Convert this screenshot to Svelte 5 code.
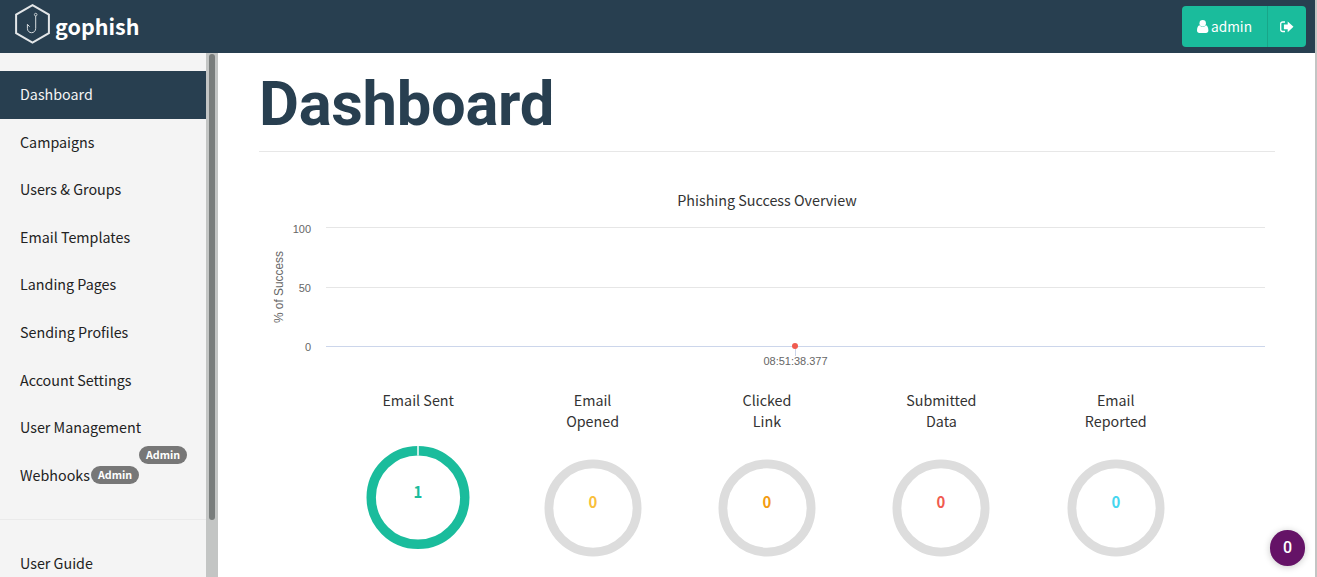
<script>
  const nav = [
    { label: 'Dashboard', active: true },
    { label: 'Campaigns' },
    { label: 'Users & Groups' },
    { label: 'Email Templates' },
    { label: 'Landing Pages' },
    { label: 'Sending Profiles' },
    { label: 'Account Settings' },
    { label: 'User Management', badge: 'high' },
    { label: 'Webhooks', badge: 'inline' }
  ];

  const stats = [
    { lines: ['Email Sent'], value: 1, color: '#1abc9c', full: true },
    { lines: ['Email', 'Opened'], value: 0, color: '#f9bf3b' },
    { lines: ['Clicked', 'Link'], value: 0, color: '#f39c12' },
    { lines: ['Submitted', 'Data'], value: 0, color: '#f05b4f' },
    { lines: ['Email', 'Reported'], value: 0, color: '#45d6ef' }
  ];
</script>

<div class="page">
  <header>
    <a class="brand" href="#home">
      <svg width="36" height="40" viewBox="0 0 36 40" fill="none">
        <path d="M17.500 1.200 33.900 10.700V29.200L17.500 38.700 1.100 29.200V10.700Z" stroke="#e3e6e8" stroke-width="2" />
        <circle cx="20.700" cy="10.600" r="1.300" stroke="#d5dadd" stroke-width="0.9" />
        <path d="M20.700 12V24.300C20.700 30.200 12.400 30.200 12.400 24.300V20.300L14.600 22.700" stroke="#d5dadd" stroke-width="1" />
      </svg>
      <span>gophish</span>
    </a>
    <div class="account">
      <button class="user">
        <svg width="12" height="13" viewBox="0 0 12 13" fill="#fff">
          <circle cx="5.700" cy="3.200" r="3.200" />
          <path d="M2.600 5.200C.8 5.500.1 7.600 0 10.200 0 12 .9 13 2.400 13H9C10.500 13 11.400 12 11.400 10.200 11.300 7.600 10.600 5.500 8.800 5.200 7.200 7.200 4.200 7.200 2.600 5.200Z" />
        </svg>
        <span>admin</span>
      </button>
      <button class="exit" aria-label="Sign out">
        <svg width="14" height="12" viewBox="0 0 14 12">
          <path d="M5 1H2.800Q.7 1 .7 3V8.500Q.7 10.500 2.800 10.500H5" fill="none" stroke="#fff" stroke-width="1.300" />
          <path d="M7.700.4 13.500 5.800 7.700 11.200V8.200H3.900V3.400H7.700Z" fill="#fff" />
        </svg>
      </button>
    </div>
  </header>

  <div class="body">
    <aside>
      <nav>
        {#each nav as item}
          <a href="#nav" class:active={item.active}>
            <span>{item.label}</span>
            {#if item.badge}<b class="badge {item.badge}">Admin</b>{/if}
          </a>
        {/each}
        <hr />
        <a href="#guide"><span>User Guide</span></a>
      </nav>
      <div class="track"><div class="thumb"></div></div>
    </aside>

    <main>
      <h1>Dashboard</h1>
      <svg class="overview" width="1016" height="204" viewBox="0 0 1016 204">
        <text class="title" x="508" y="34" text-anchor="middle" textLength="179.500">Phishing Success Overview</text>
        <g shape-rendering="crispEdges">
          <path d="M67 55.500H1006M67 115.500H1006" stroke="#e6e6e6" />
          <path d="M67 174.500H1006M536.500 175V184" stroke="#ccd6eb" />
        </g>
        <g class="axis" text-anchor="end">
          <text x="52" y="61">100</text>
          <text x="52" y="120">50</text>
          <text x="52" y="179">0</text>
        </g>
        <text class="axis-title" transform="translate(24 115) rotate(-90)" text-anchor="middle" textLength="72" lengthAdjust="spacingAndGlyphs">% of Success</text>
        <circle cx="536" cy="174" r="3" fill="#f05b4f" />
        <text class="axis" x="536.500" y="193" text-anchor="middle" textLength="64">08:51:38.377</text>
      </svg>

      <section class="stats">
        {#each stats as s}
          <figure class:full={s.full}>
            <figcaption>
              {#each s.lines as line}<span>{line}</span>{/each}
            </figcaption>
            <svg width="104" height="104" viewBox="0 0 104 104">
              {#if s.full}
                <circle cx="52" cy="52.500" r="46.800" fill="none" stroke={s.color} stroke-width="9.400" />
                <path d="M52 0V10.500" stroke="#fff" stroke-width="1.500" />
              {:else}
                <circle cx="52" cy="52" r="44.100" fill="none" stroke="#ddd" stroke-width="8.800" />
              {/if}
              <text x="52" y={s.full ? 52.500 : 52} text-anchor="middle" textLength="8.800" lengthAdjust="spacingAndGlyphs" fill={s.color}>{s.value}</text>
            </svg>
          </figure>
        {/each}
      </section>
    </main>
    <div class="edge"></div>
  </div>
  <div class="bubble">0</div>
</div>

<style>
  :global(body) { margin: 0; overflow: hidden; }
  .page {
    position: relative;
    display: flex;
    flex-direction: column;
    width: 1317px;
    height: 577px;
    overflow: hidden;
    background: #fff;
    color: #333;
    font-family: 'Noto Sans CJK SC', 'Open Sans', sans-serif;
    font-size: 14.300px;
  }
  header {
    display: flex;
    flex: none;
    justify-content: space-between;
    box-sizing: border-box;
    width: 1315px;
    height: 53px;
    padding: 4px 9px 0 15px;
    background: #283f50;
  }
  a { color: inherit; text-decoration: none; }
  .brand { display: flex; gap: 4px; color: #fff; }
  .brand span { font-size: 21.500px; font-weight: 700; line-height: 44px; }
  .account { display: flex; height: 41px; margin-top: 2px; border-radius: 4px; overflow: hidden; }
  button {
    display: flex;
    align-items: center;
    justify-content: center;
    padding: 0;
    border: 0;
    background: #1abc9c;
    color: #fff;
    font: inherit;
  }
  .user { gap: 2px; width: 85px; font-size: 13.700px; }
  .user span { padding-bottom: 2px; }
  .exit { width: 39px; border-left: 1px solid #18a689; }
  .body { display: flex; flex: 1; min-height: 0; }
  aside { display: flex; flex: none; width: 218px; background: #f4f4f4; }
  nav { flex: 1; padding-top: 18px; color: #222; }
  nav a {
    display: flex;
    position: relative;
    align-items: center;
    height: 47.620px;
    padding-left: 20px;
  }
  nav a span { padding-bottom: 2.600px; }
  nav .active { background: #283f50; color: #f5f5f5; }
  .badge {
    position: absolute;
    width: 48px;
    height: 18px;
    border-radius: 9px;
    background: #777;
    color: #fff;
    font-size: 10.700px;
    line-height: 18px;
    text-align: center;
  }
  .high { left: 139px; top: 42px; }
  .inline { left: 91px; top: 14px; }
  hr { height: 1px; margin: 19.500px 0 20px; border: 0; background: #eaeaea; }
  .track { width: 12px; background: #c3c5c4; }
  .thumb { width: 6px; height: 466px; margin: 1px 0 0 3px; border-radius: 3px; background: #797d7c; }
  main { flex: 1; padding: 0 40px 0 41px; }
  h1 {
    height: 98px;
    margin: 0 0 20px;
    border-bottom: 1px solid #e7e7e7;
    color: #283f50;
    font: 700 61.500px/103px Roboto, sans-serif;
    letter-spacing: -.3px;
  }
  .overview { display: block; }
  .title { font-size: 14.350px; fill: #333; }
  .axis { font: 11px 'Liberation Sans', sans-serif; fill: #666; }
  .axis-title { font: 12px 'Liberation Sans', sans-serif; fill: #666; }
  .stats { display: grid; grid-template-columns: repeat(5, 174.400px); margin: 13px 0 0 72px; }
  figure { display: flex; flex-direction: column; align-items: center; margin: 0; }
  figcaption { display: flex; flex-direction: column; align-items: center; height: 67px; line-height: 21px; }
  .full figcaption { height: 56px; }
  figure text { font-size: 16px; font-weight: 700; }
  .edge { width: 2px; margin-top: -53px; background: #c3c5c4; }
  .bubble {
    position: absolute;
    left: 1270px;
    top: 530px;
    width: 35px;
    height: 36px;
    border-radius: 18px;
    background: #651367;
    box-shadow: 0 1px 7px rgba(0, 0, 0, .22);
    color: #fff;
    font: 500 16px/36px Roboto, sans-serif;
    text-align: center;
  }
</style>
